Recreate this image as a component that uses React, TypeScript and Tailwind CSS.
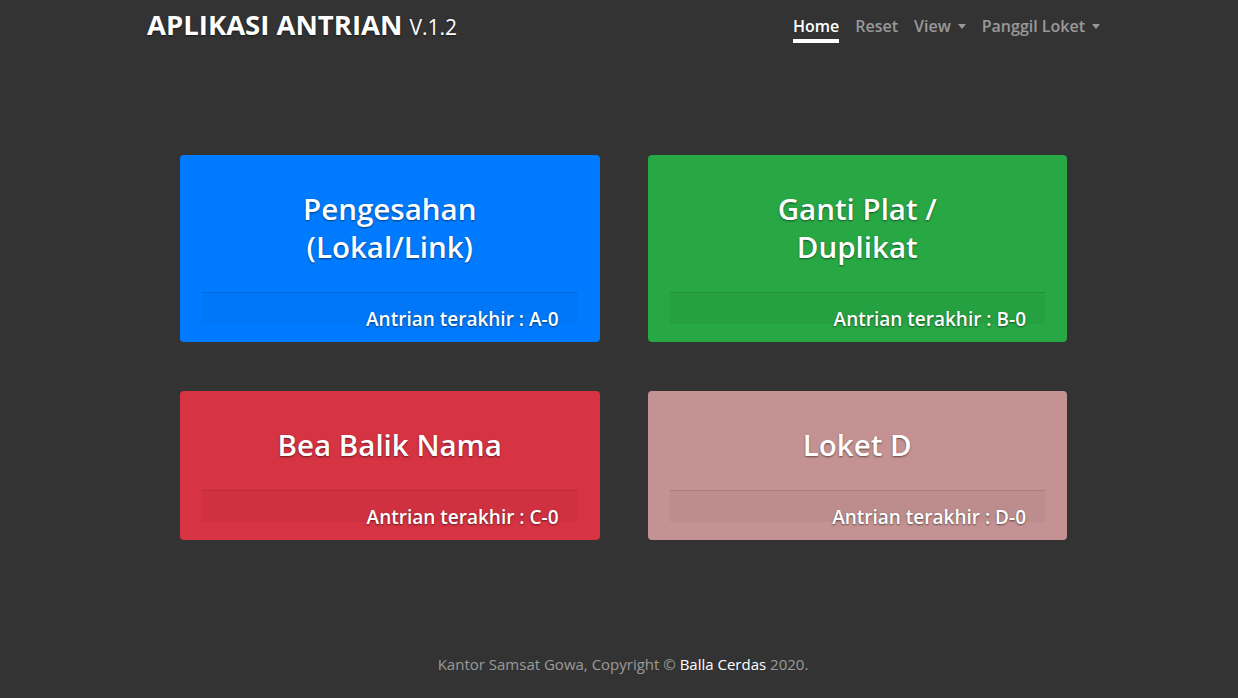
const font = { fontFamily: '"Open Sans", "Noto Sans", sans-serif' };

interface Loket {
  id: string;
  title: string[];
  bg: string;
}

const lokets: Loket[] = [
  { id: 'A', title: ['Pengesahan', '(Lokal/Link)'], bg: 'bg-[#007bff]' },
  { id: 'B', title: ['Ganti Plat /', 'Duplikat'], bg: 'bg-[#28a745]' },
  { id: 'C', title: ['Bea Balik Nama'], bg: 'bg-[#d63343]' },
  { id: 'D', title: ['Loket D'], bg: 'bg-[#c49292]' },
];

const Caret = () => (
  <span className="ml-[7px] inline-block h-0 w-0 border-x-[4px] border-t-[5px] border-x-transparent border-t-current align-middle" />
);

const App: React.FC = () => {
  return (
    <div className="flex h-[698px] flex-col bg-[#333333] text-white" style={font}>
      <header className="ml-[147px] flex w-[953px] items-start justify-between">
        <h3 className="pt-[8px] text-[27.5px] leading-[34px] font-bold [text-shadow:0_1px_2px_rgba(0,0,0,0.5)]">
          APLIKASI ANTRIAN <span className="text-[21px] font-normal">V.1.2</span>
        </h3>
        <nav className="flex pt-[7px] text-[16px] font-semibold leading-[26px]">
          <a className="border-b-4 border-white pt-[6px] text-white">Home</a>
          <a className="ml-4 border-b-4 border-transparent pt-[6px] text-white/50">Reset</a>
          <a className="ml-4 flex items-center border-b-4 border-transparent pt-[6px] text-white/50">
            View <Caret />
          </a>
          <a className="ml-4 flex items-center border-b-4 border-transparent pt-[6px] text-white/50">
            Panggil Loket <Caret />
          </a>
        </nav>
      </header>

      <main className="ml-[180px] mt-[111px] grid w-[887px] grid-cols-2 gap-x-[48px] gap-y-[49px]">
        {lokets.map((l) => (
          <div key={l.id} className={`${l.bg} flex flex-col rounded-[4px] px-[22px] pt-[35px] pb-[18.5px]`}>
            <h2 className="text-center text-[29.5px] font-semibold leading-[38.4px] [text-shadow:0_1px_2px_rgba(0,0,0,0.5)]">
              {l.title.map((t) => (
                <div key={t}>{t}</div>
              ))}
            </h2>
            <div className="mt-[25px] h-[32px] border-t border-black/[0.1] bg-black/[0.03] pr-[19px] pt-[14px] text-right">
              <h5 className="text-[19px] font-semibold leading-[24px] [text-shadow:0_1px_2px_rgba(0,0,0,0.5)]">
                Antrian terakhir : {l.id}-0
              </h5>
            </div>
          </div>
        ))}
      </main>

      <footer className="mt-auto pb-[22px] text-center text-[15px] leading-[24px] text-white/50">
        <p className="ml-[8px]">
          Kantor Samsat Gowa, Copyright © <span className="text-white">Balla Cerdas</span> 2020.
        </p>
      </footer>
    </div>
  );
};

export default App;
